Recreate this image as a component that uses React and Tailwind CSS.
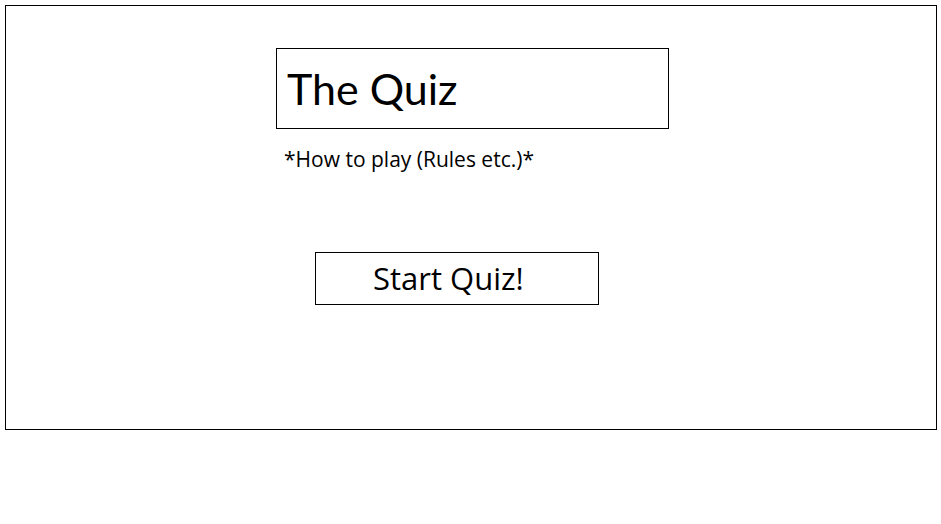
export default function App() {
  return (
    <div className="w-[941px] h-[524px] bg-white pt-[5px] pl-[5px] font-['Lato',sans-serif] text-black">
      <div className="w-[932px] h-[425px] border border-black pl-[270px] pt-[42px]">
        {/* Title */}
        <div className="w-[393px] h-[81px] border border-black pl-[10px] pt-[18px]">
          <h1 className="text-[43px] leading-none">The Quiz</h1>
        </div>

        {/* Rules */}
        <p className="ml-[8px] mt-[20px] text-[21px] leading-none font-['Open_Sans',sans-serif]">*How to play (Rules etc.)*</p>

        {/* Start */}
        <button className="mt-[82px] ml-[39px] w-[284px] h-[53px] border border-black flex items-center pl-[57px] pb-[1px] text-[31px] leading-none font-['Open_Sans',sans-serif]">
          Start Quiz!
        </button>
      </div>
    </div>
  )
}
